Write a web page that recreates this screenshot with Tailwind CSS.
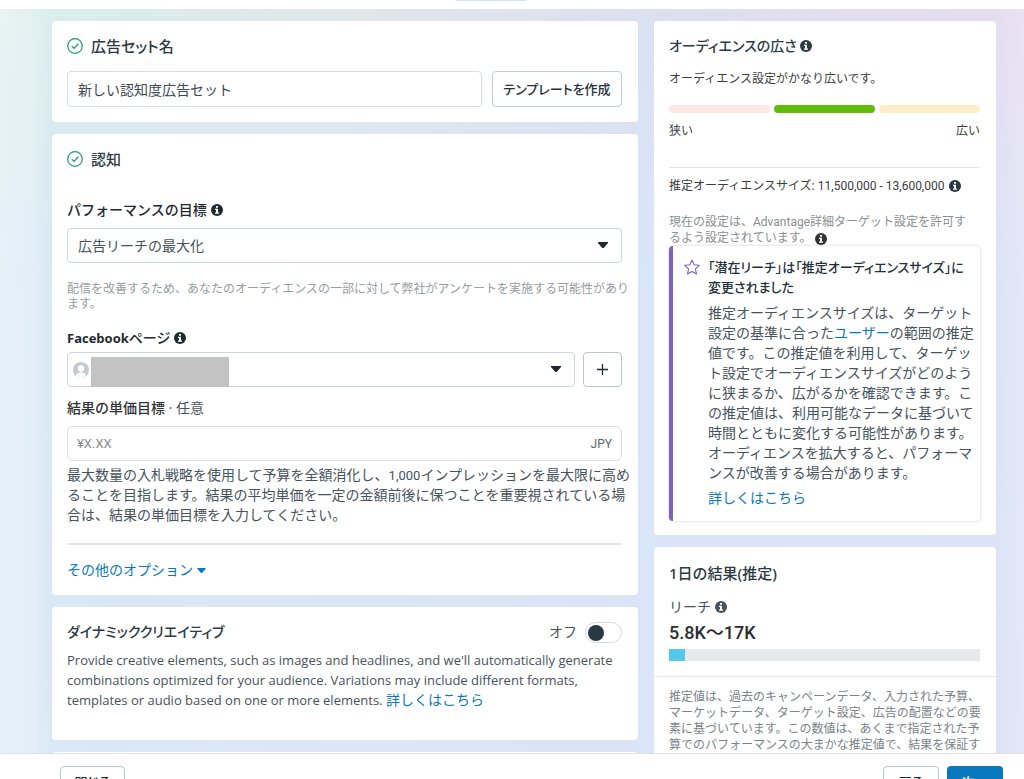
<!DOCTYPE html>
<html lang="ja">
<head>
<meta charset="utf-8">
<meta name="viewport" content="width=device-width, initial-scale=1">
<title>広告セット</title>
<script src="https://cdn.jsdelivr.net/npm/@tailwindcss/browser@4"></script>
</head>
<body class="flex h-screen flex-col overflow-hidden bg-white font-['Open_Sans','Noto_Sans_CJK_JP',sans-serif] text-sm leading-5 text-[#46535d]">
<svg class="hidden" aria-hidden="true">
  <symbol id="info" viewBox="0 0 12 12"><circle cx="6" cy="6" r="6" fill="currentColor"/><path d="M5 2h2v1.8H5zM4 4.8h3v3.7h1v1.2H4V8.500h1V6H4z" fill="#fff"/></symbol>
  <symbol id="check" viewBox="0 0 16 16"><circle cx="8" cy="8" r="7.300" fill="none" stroke="#1f9a6c" stroke-width="1.200"/><path d="M4.800 8.300 7 10.400l4.300-4.600" fill="none" stroke="#1f9a6c" stroke-width="1.300"/></symbol>
  <symbol id="caret" viewBox="0 0 10 6"><path d="M0 0h10v1L6.200 5.500q-1.200 1-2.400 0L0 1z" fill="currentColor"/></symbol>
</svg>

<header class="flex h-[9px] shrink-0 items-start justify-center bg-white pr-[43px]"><span class="h-px w-[70px] bg-[#cfe4f5]"></span></header>

<main class="flex min-h-0 flex-1 items-start gap-4 overflow-hidden bg-[linear-gradient(90deg,rgb(255_255_255/0.35)_0,rgb(255_255_255/0.25)_32px,transparent_52px,transparent_calc(100%-28px),rgb(255_255_255/0.2)_100%),radial-gradient(ellipse_20px_600px_at_646px_60%,rgb(216_232_249/0.8),transparent),linear-gradient(180deg,transparent,rgb(216_230_250/0.7)_40%,rgb(218_230_252/0.6)),linear-gradient(90deg,#d9eeec,#e0e8ea_35%,#dddff0_63%,#e6dcf0)] pt-3 pr-7 pl-[52px]">
  <div class="flex min-w-0 flex-1 flex-col gap-3">

    <section class="rounded-sm bg-white pt-[13px] pr-4 pb-[15px] pl-[15px]">
      <h2 class="flex items-center gap-2 text-[15px] leading-6 font-medium text-[#2b3a44] [font-feature-settings:'palt']"><svg class="size-4"><use href="#check"/></svg><label for="setname">広告セット名</label></h2>
      <div class="mt-[13px] flex gap-[10px]">
        <input id="setname" type="text" value="新しい認知度広告セット" class="h-9 min-w-0 flex-1 rounded border border-[#d8dee6] px-[10px] text-sm text-[#3c4a54]">
        <button type="button" class="h-9 w-[130px] rounded border border-[#c3ccd6] text-[13px] font-medium text-[#22313b] [font-feature-settings:'palt']">テンプレートを作成</button>
      </div>
    </section>

    <section class="rounded-sm bg-white pt-[13px] pr-4 pb-[15px] pl-[15px]">
      <h2 class="flex items-center gap-2 text-[15px] leading-6 font-medium text-[#2b3a44]"><svg class="size-4"><use href="#check"/></svg>認知</h2>
      <div class="mt-[29px] flex items-center gap-1 font-medium text-[#1c2b33]"><label for="goal">パフォーマンスの目標</label><svg class="size-3"><use href="#info"/></svg></div>
      <div class="relative mt-2">
        <select id="goal" class="h-[35px] w-full appearance-none rounded border border-[#ccd5e0] bg-white px-[10px] text-sm text-[#46535d]"><option>広告リーチの最大化</option></select>
        <svg class="pointer-events-none absolute top-[14px] right-[14px] h-[6px] w-[10px] text-[#1c2b33]"><use href="#caret"/></svg>
      </div>
      <p class="mt-[18px] text-xs leading-[15px] whitespace-nowrap text-[#979da1]">配信を改善するため、あなたのオーディエンスの一部に対して弊社がアンケートを実施する可能性があり<br>ます。</p>
      <div class="mt-[17px] flex items-center gap-1 text-[#1c2b33]"><label for="page" class="font-medium"><span class="text-[13px] font-bold">Facebook</span>ページ</label><svg class="size-3"><use href="#info"/></svg></div>
      <div class="mt-1 flex gap-2">
        <div class="relative flex-1">
          <select id="page" class="h-[35px] w-full appearance-none rounded border border-[#ccd5e0] bg-white"><option></option></select>
          <svg class="pointer-events-none absolute top-[10px] left-[6px] size-4" viewBox="0 0 16 16"><circle cx="8" cy="8" r="8" fill="#c3c9ce"/><circle cx="8" cy="6.500" r="3.200" fill="#fff"/><path d="M3 14.200c.3-3 2.300-4 5-4s4.700 1 5 4q-5 3.500-10 0z" fill="#fff"/></svg>
          <span class="pointer-events-none absolute top-[5px] bottom-0 left-6 w-[138px] bg-[#c3c3c3]"></span>
          <svg class="pointer-events-none absolute top-[14px] right-[14px] h-[6px] w-[10px] text-[#1c2b33]"><use href="#caret"/></svg>
        </div>
        <button type="button" aria-label="ページを追加" class="flex h-[35px] w-[39px] items-center justify-center rounded border border-[#b9c4d1]"><svg class="size-[11px]" viewBox="0 0 11 11"><path d="M5.500 0v11M0 5.500h11" stroke="#1c2b33" stroke-width="1.300"/></svg></button>
      </div>
      <label for="cost" class="mt-[11px] block"><span class="font-medium text-[#333]">結果の単価目標</span> · 任意</label>
      <div class="mt-2 flex h-[35px] items-center rounded-md border border-[#dcdee1] px-[9px]">
        <input id="cost" type="text" placeholder="¥X.XX" class="min-w-0 flex-1 font-['Roboto'] text-[13px] placeholder:text-[#888e93]">
        <span class="font-['Roboto'] text-xs text-[#5b646b]">JPY</span>
      </div>
      <p class="mt-1 whitespace-nowrap">最大数量の入札戦略を使用して予算を全額消化し、<span class="font-['Roboto'] text-[13px] leading-4">1,000</span>インプレッションを最大限に高め<br>ることを目指します。結果の平均単価を一定の金額前後に保つことを重要視されている場<br>合は、結果の単価目標を入力してください。</p>
      <hr class="mt-[18px] border-t-2 border-[#e6e8ea]">
      <a href="#" class="mt-[15px] flex items-center gap-1 text-[#0a78be]">その他のオプション<svg class="h-[5px] w-[9px]"><use href="#caret"/></svg></a>
    </section>

    <section class="rounded-sm bg-white pt-[13px] pr-4 pb-[30px] pl-[15px]">
      <div class="flex h-6 items-center justify-between">
        <h2 class="text-sm leading-6 font-medium text-[#2b3a44] [font-feature-settings:'palt']">ダイナミッククリエイティブ</h2>
        <label class="flex items-center gap-2">オフ
          <input type="checkbox" role="switch" class="h-[21px] w-[37px] appearance-none rounded-full border border-[#d3dae3] bg-white p-[2px] before:block before:size-4 before:rounded-full before:bg-[#283943]"></label>
      </div>
      <p class="mt-[6px] text-[13px] leading-5 whitespace-nowrap">Provide creative elements, such as images and headlines, and we'll automatically generate<br>combinations optimized for your audience. Variations may include different formats,<br>templates or audio based on one or more elements. <a href="#" class="text-sm leading-4 text-[#0a78be]">詳しくはこちら</a></p>
    </section>

    <section class="h-10 rounded-sm bg-white"></section>
  </div>

  <aside class="flex w-[342px] shrink-0 flex-col gap-3">
    <section class="rounded-sm bg-white pt-[13px] pr-4 pb-[14px] pl-[15px]">
      <h2 class="flex items-center gap-[3px] text-sm leading-6 font-medium text-[#2b3a44] [font-feature-settings:'palt']">オーディエンスの広さ<svg class="size-3"><use href="#info"/></svg></h2>
      <p class="mt-[13px] text-xs leading-4 text-[#3a3d40]">オーディエンス設定がかなり広いです。</p>
      <div class="mt-[18px] grid grid-cols-3 gap-1"><span class="h-2 rounded-full bg-[#fee8e3]"></span><span class="h-2 rounded-full bg-[#62bd0b]"></span><span class="h-2 rounded-full bg-[#feedc8]"></span></div>
      <div class="mt-[10px] flex justify-between text-xs leading-4 text-[#3a3d40]"><span>狭い</span><span>広い</span></div>
      <hr class="mt-7 border-[#e3e5e7]">
      <p class="mt-[10px] flex items-center gap-[5px] text-xs leading-4 text-[#3a3d40]"><span>推定オーディエンスサイズ: <span class="font-['Roboto']">11,500,000 - 13,600,000</span></span><svg class="size-3 text-[#283943]"><use href="#info"/></svg></p>
      <p class="mt-5 text-xs leading-4 whitespace-nowrap text-[#8a8f92]">現在の設定は、<span class="font-['Roboto']">Advantage</span>詳細ターゲット設定を許可す<br>るよう設定されています。<svg class="ml-1 inline size-3 text-[#333]"><use href="#info"/></svg></p>
      <div class="flex gap-2 rounded border-l-4 border-[#7b63be] pt-[11px] pr-1 pb-[13px] pl-[11px] shadow-[0_0_3px_rgb(0_0_0/0.2)]">
        <svg class="mt-[2px] size-4 shrink-0" viewBox="0 0 16 16"><path d="m8 1 2.100 4.700 5.200.600-3.900 3.500 1.100 5.200L8 12.400 3.500 15l1.100-5.200L.700 6.300l5.200-.600z" fill="none" stroke="#7b63be" stroke-width="1.100" stroke-linejoin="round"/></svg>
        <div class="whitespace-nowrap">
          <h3 class="text-[13px] leading-5 font-medium text-[#22313b] [font-feature-settings:'palt']">「潜在リーチ」は「推定オーディエンスサイズ」に<br>変更されました</h3>
          <p class="mt-[6px]">推定オーディエンスサイズは、ターゲット<br>設定の基準に合った<a href="#" class="text-[#0a78be]">ユーザー</a>の範囲の推定<br>値です。この推定値を利用して、ターゲッ<br>ト設定でオーディエンスサイズがどのよう<br>に狭まるか、広がるかを確認できます。こ<br>の推定値は、利用可能なデータに基づいて<br>時間とともに変化する可能性があります。<br>オーディエンスを拡大すると、パフォーマ<br>ンスが改善する場合があります。</p>
          <a href="#" class="mt-[5px] block text-[#0a78be]">詳しくはこちら</a>
        </div>
      </div>
    </section>

    <section class="rounded-sm bg-white pt-[14px]">
      <div class="pr-4 pl-[15px]">
        <h2 class="font-['Noto_Sans','Noto_Sans_CJK_JP'] text-[15px] leading-6 font-medium text-[#2b3a44]">1日の結果(推定)</h2>
        <p class="mt-3 flex items-center gap-1">リーチ<svg class="size-3"><use href="#info"/></svg></p>
        <p class="mt-[5px] font-['Roboto','Noto_Sans_CJK_JP'] text-[18px] leading-[22px] font-medium text-[#2a2d30]">5.8K〜17K</p>
        <div class="mt-[5px] h-3 bg-[#e8e9ed]"><div class="h-3 bg-[#54c7ec]" style="width:5%"></div></div>
      </div>
      <hr class="mt-[15px] border-[#e6e8ea]">
      <p class="px-[15px] pt-3 pb-4 text-xs leading-4 whitespace-nowrap text-[#7b8387]">推定値は、過去のキャンペーンデータ、入力された予算、<br>マーケットデータ、ターゲット設定、広告の配置などの要<br>素に基づいています。この数値は、あくまで指定された予<br>算でのパフォーマンスの大まかな推定値で、結果を保証す</p>
    </section>
  </aside>
</main>

<footer class="flex h-[26px] shrink-0 items-start justify-between overflow-hidden border-t border-[#dfe2e6] bg-white pt-3 pr-[21px] pl-[60px] text-[13px] font-medium [font-feature-settings:'palt']">
  <button type="button" class="h-8 w-[65px] shrink-0 rounded border border-[#b9c4d1] leading-5 text-[#1c2b33]">閉じる</button>
  <div class="flex gap-2">
    <button type="button" class="h-8 w-14 rounded border border-[#b9c4d1] leading-5 text-[#1c2b33]">戻る</button>
    <button type="button" class="h-8 w-14 rounded bg-[#0a78be] leading-5 text-white">次へ</button>
  </div>
</footer>
</body>
</html>
